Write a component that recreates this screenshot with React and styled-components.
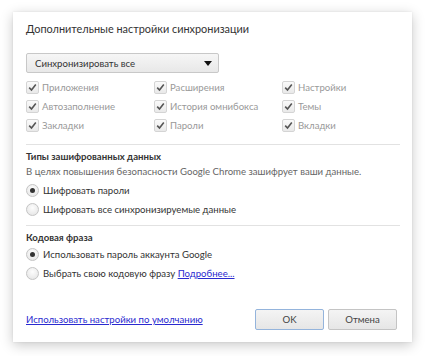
import React from "react";
import styled, { createGlobalStyle } from "styled-components";

const Global = createGlobalStyle`
  html, body { margin: 0; padding: 0; background: #ffffff; }
  body { font-family: Lato, "Open Sans", sans-serif; }
`;

const Page = styled.div`
  width: 434px;
  height: 356px;
  padding: 12px 0 0 13px;
  box-sizing: border-box;
`;

const Dialog = styled.div`
  width: 399px;
  box-sizing: border-box;
  padding: 0 12px 12px 13px;
  background: #fff;
  box-shadow: 0 3px 12px rgba(0, 0, 0, 0.22), 0 0 2px rgba(0, 0, 0, 0.08);
  display: flex;
  flex-direction: column;
`;

const Title = styled.div`
  height: 34px;
  line-height: 34px;
  font-size: 10.9px;
  color: #333;
`;

const Select = styled.div`
  margin-top: 7px;
  width: 193px;
  height: 20px;
  box-sizing: border-box;
  border: 1px solid #c8c8c8;
  border-radius: 2px;
  background: linear-gradient(#f6f6f6, #e8e8e8);
  display: flex;
  align-items: center;
  justify-content: space-between;
  padding: 0 6px 0 8px;
  font-size: 9.6px;
  color: #333;
`;

const Grid = styled.div`
  margin-top: 5px;
  display: grid;
  grid-template-columns: 128px 128px 1fr;
  grid-auto-rows: 19px;
`;

const CheckItem = styled.label`
  display: flex;
  align-items: center;
  gap: 3px;
  font-size: 9.6px;
  color: #999;
`;

const Box = styled.span`
  width: 13px;
  height: 13px;
  box-sizing: border-box;
  border: 1px solid #d4d4d4;
  border-radius: 2px;
  background: linear-gradient(#fafafa, #e9e9e9);
  display: flex;
  align-items: center;
  justify-content: center;
`;

const Separator = styled.div`
  margin-top: ${(p) => p.$top}px;
  height: 1px;
  background: #e2e2e2;
`;

const Heading = styled.div`
  padding-top: 4px;
  line-height: 15px;
  font-size: 9.6px;
  font-weight: 700;
  color: #333;
`;

const Desc = styled.div`
  line-height: 15px;
  font-size: 9.6px;
  color: #666;
  white-space: nowrap;
`;

const RadioRow = styled.label`
  height: 19px;
  display: flex;
  align-items: center;
  gap: 4px;
  font-size: 9.6px;
  color: #333;
  &:first-of-type { margin-top: 2px; }
`;

const Radio = styled.span`
  width: 13px;
  height: 13px;
  box-sizing: border-box;
  border-radius: 50%;
  border: 1px solid #c4c4c4;
  background: radial-gradient(circle at 50% 35%, #fdfdfd, #e2e2e2);
  display: flex;
  align-items: center;
  justify-content: center;
  &::after {
    content: "";
    width: 5px;
    height: 5px;
    border-radius: 50%;
    background: ${(p) => (p.$on ? "#333" : "transparent")};
  }
`;

const Link = styled.a`
  color: #2a2ad0;
  text-decoration: underline;
  font-size: 9.6px;
  cursor: pointer;
`;

const Footer = styled.div`
  margin-top: 26px;
  display: flex;
  align-items: center;
  justify-content: space-between;
  padding-right: 3px;
`;

const Buttons = styled.div`
  display: flex;
  gap: 4px;
`;

const Button = styled.button`
  width: 69px;
  height: 21px;
  box-sizing: border-box;
  border: 1px solid ${(p) => (p.$primary ? "#94b4dc" : "#c4c4c4")};
  border-radius: 2px;
  background: linear-gradient(#f4f4f4, #e6e6e6);
  font-family: inherit;
  font-size: 9.6px;
  color: #444;
  padding: 0;
`;

const Check = () => (
  <svg width="9" height="9" viewBox="0 0 9 9">
    <path d="M1.2 4.6 L3.5 7 L7.8 1.5" fill="none" stroke="#555" strokeWidth="1.6" />
  </svg>
);

const items = [
  "Приложения", "Расширения", "Настройки",
  "Автозаполнение", "История омнибокса", "Темы",
  "Закладки", "Пароли", "Вкладки",
];

export default function App() {
  return (
    <Page>
      <Global />
      <Dialog>
        <Title>Дополнительные настройки синхронизации</Title>
        <Select>
          <span>Синхронизировать все</span>
          <svg width="8" height="5" viewBox="0 0 8 5">
            <path d="M0 0 H8 L4 5 Z" fill="#111" />
          </svg>
        </Select>
        <Grid>
          {items.map((t) => (
            <CheckItem key={t}>
              <Box><Check /></Box>
              {t}
            </CheckItem>
          ))}
        </Grid>
        <Separator $top={9} />
        <Heading>Типы зашифрованных данных</Heading>
        <Desc>В целях повышения безопасности Google Chrome зашифрует ваши данные.</Desc>
        <RadioRow><Radio $on />Шифровать пароли</RadioRow>
        <RadioRow><Radio />Шифровать все синхронизируемые данные</RadioRow>
        <Separator $top={6} />
        <Heading>Кодовая фраза</Heading>
        <RadioRow><Radio $on />Использовать пароль аккаунта Google</RadioRow>
        <RadioRow>
          <Radio />
          <span>Выбрать свою кодовую фразу <Link>Подробнее...</Link></span>
        </RadioRow>
        <Footer>
          <Link>Использовать настройки по умолчанию</Link>
          <Buttons>
            <Button $primary>OK</Button>
            <Button>Отмена</Button>
          </Buttons>
        </Footer>
      </Dialog>
    </Page>
  );
}
